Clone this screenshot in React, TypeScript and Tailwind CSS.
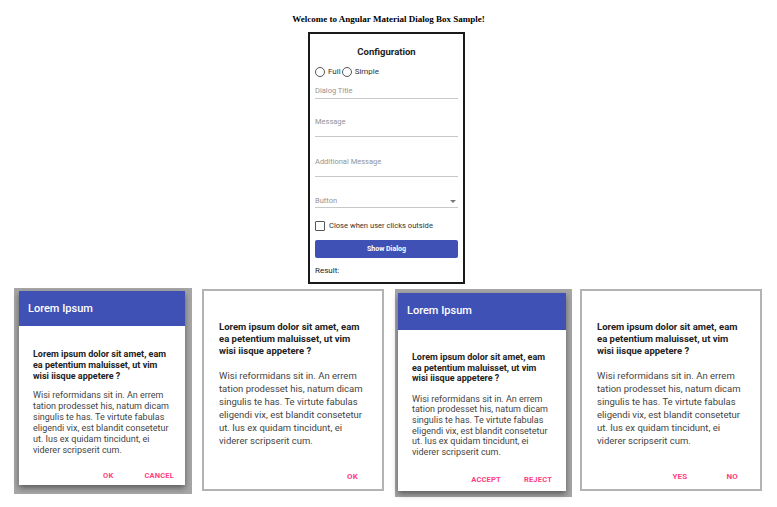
const QUESTION = [
  "Lorem ipsum dolor sit amet, eam",
  "ea petentium maluisset, ut vim",
  "wisi iisque appetere ?",
];

const BODY = [
  "Wisi reformidans sit in. An errem",
  "tation prodesset his, natum dicam",
  "singulis te has. Te virtute fabulas",
  "eligendi vix, est blandit consetetur",
  "ut. Ius ex quidam tincidunt, ei",
  "viderer scripserit cum.",
];

const FONT = "font-['Roboto','Liberation_Sans',sans-serif]";

function Lines({ lines, className }: { lines: string[]; className: string }) {
  return (
    <div className={className}>
      {lines.map((line) => (
        <div key={line} className="whitespace-nowrap">
          {line}
        </div>
      ))}
    </div>
  );
}

function ActionButton({ label, className }: { label: string; className?: string }) {
  return (
    <span className={`text-[7.5px] font-bold leading-[10px] tracking-[0.2px] text-[#ff4081] ${className ?? ""}`}>
      {label}
    </span>
  );
}

function Field({ label, gap, arrow }: { label: string; gap: string; arrow?: boolean }) {
  return (
    <div className={`flex items-start justify-between border-b border-[#c9c9c9] ${gap}`}>
      <span className="text-[7.5px] leading-[10px] text-[#949494]">{label}</span>
      {arrow && (
        <span className="mr-[2px] mt-[4px] h-0 w-0 border-x-[3px] border-t-[3px] border-x-transparent border-t-[#777]" />
      )}
    </div>
  );
}

function ConfigPanel() {
  return (
    <div className={`ml-[308px] h-[252px] w-[157px] border-2 border-[#1a1a1a] bg-white px-[5px] pt-[12px] ${FONT}`}>
      <div className="text-center text-[9.5px] font-bold leading-[12px] text-[#222]">Configuration</div>
      <div className="mt-[8px] flex h-[12px] items-center text-[8px] text-[#333]">
        <span className="h-[10px] w-[10px] rounded-full border border-[#555]" />
        <span className="ml-[3px]">Full</span>
        <span className="ml-[1px] h-[10px] w-[10px] rounded-full border border-[#555]" />
        <span className="ml-[3px]">Simple</span>
      </div>
      <div className="mt-[8px]">
        <Field label="Dialog Title" gap="pb-[2px]" />
      </div>
      <div className="mt-[18px]">
        <Field label="Message" gap="pb-[9px]" />
      </div>
      <div className="mt-[20px]">
        <Field label="Additional Message" gap="pb-[9px]" />
      </div>
      <div className="mt-[19px]">
        <Field label="Button" gap="pb-[1px]" arrow />
      </div>
      <div className="mt-[12px] flex h-[12px] items-center text-[7.6px] text-[#333]">
        <span className="h-[10px] w-[10px] rounded-[1px] border-[1.5px] border-[#555]" />
        <span className="ml-[4px]">Close when user clicks outside</span>
      </div>
      <div className="mt-[8px] flex h-[18px] items-center justify-center rounded-[2px] bg-[#3f51b5] text-[7px] font-bold text-white">
        Show Dialog
      </div>
      <div className="mt-[8px] text-[8px] leading-[10px] text-[#222]">Result:</div>
    </div>
  );
}

function FullDialog({
  frame,
  headerH,
  qTop,
  lh,
  bodyGap,
  actions,
}: {
  frame: string;
  headerH: string;
  qTop: string;
  lh: string;
  bodyGap: string;
  actions: React.ReactNode;
}) {
  return (
    <div className={`bg-[#a6a6a6] ${frame}`}>
      <div className="bg-white shadow-[0_3px_6px_rgba(0,0,0,0.45)]">
        <div className={`flex items-center bg-[#3f51b5] pl-[9px] text-[11px] font-medium text-white ${headerH}`}>
          Lorem Ipsum
        </div>
        <div className={`px-[14px] ${qTop}`}>
          <Lines lines={QUESTION} className={`text-[9px] font-bold text-[#222] ${lh}`} />
          <Lines lines={BODY} className={`text-[9px] text-[#444] ${bodyGap} ${lh}`} />
          {actions}
        </div>
      </div>
    </div>
  );
}

function SimpleDialog({ actions }: { actions: React.ReactNode }) {
  return (
    <div className="h-[202px] border-2 border-[#b3b3b3] bg-white">
      <div className="pl-[15px] pt-[30px]">
        <Lines lines={QUESTION} className="text-[9.5px] font-bold leading-[12px] text-[#222]" />
        <Lines lines={BODY} className="mt-[12px] text-[9.5px] leading-[13px] text-[#444]" />
      </div>
      {actions}
    </div>
  );
}

export default function App() {
  return (
    <div className={`h-[507px] w-[777px] bg-white ${FONT}`}>
      <div className="pt-[13px] text-center font-['Liberation_Serif',serif] text-[9px] font-bold leading-[12px] text-black">
        Welcome to Angular Material Dialog Box Sample!
      </div>
      <div className="mt-[7px]">
        <ConfigPanel />
      </div>
      <div className="flex items-start">
        <div className="ml-[14px] mt-[4px] w-[178px]">
          <FullDialog
            frame="pl-[5px] pr-[7px] pt-[3px] pb-[9px]"
            headerH="h-[35px] pt-[2px]"
            qTop="pt-[23px] pb-[4px]"
            lh="leading-[11px]"
            bodyGap="mt-[8px]"
            actions={
              <div className="-mr-[3px] mt-[15px] flex justify-end">
                <ActionButton label="OK" />
                <ActionButton label="CANCEL" className="ml-[31px]" />
              </div>
            }
          />
        </div>
        <div className="ml-[10px] mt-[5px] w-[182px]">
          <SimpleDialog
            actions={
              <div className="mt-[25px] flex justify-end pr-[24px]">
                <ActionButton label="OK" className="text-[8px]" />
              </div>
            }
          />
        </div>
        <div className="ml-[11px] mt-[5px] w-[177px]">
          <FullDialog
            frame="pl-[3px] pr-[6px] pt-[4px] pb-[6px]"
            headerH="h-[37px]"
            qTop="pt-[22px] pb-[6px]"
            lh="leading-[10.6px]"
            bodyGap="mt-[10px]"
            actions={
              <div className="mt-[18px] flex justify-end">
                <ActionButton label="ACCEPT" />
                <ActionButton label="REJECT" className="ml-[23px]" />
              </div>
            }
          />
        </div>
        <div className="ml-[8px] mt-[5px] w-[182px]">
          <SimpleDialog
            actions={
              <div className="mt-[25px] flex justify-end pr-[22px]">
                <ActionButton label="YES" className="text-[8px]" />
                <ActionButton label="NO" className="ml-[39px] text-[8px]" />
              </div>
            }
          />
        </div>
      </div>
    </div>
  );
}
